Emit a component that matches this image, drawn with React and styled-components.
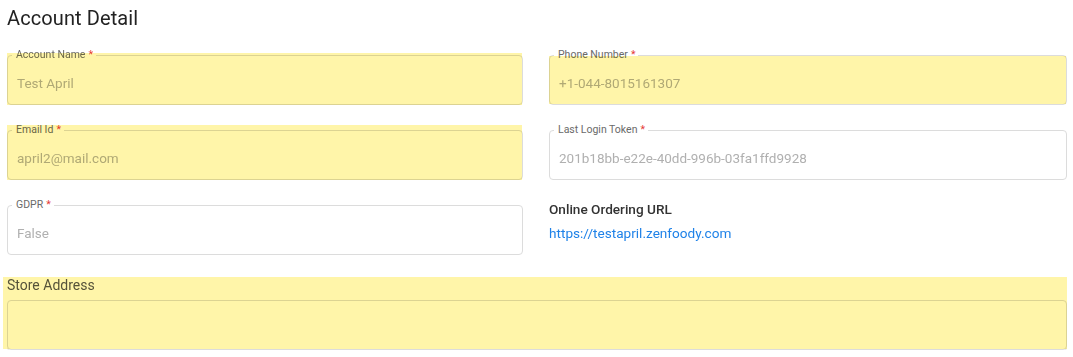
import React from "react";
import styled, { createGlobalStyle, css } from "styled-components";

const Global = createGlobalStyle`
  html, body { margin: 0; padding: 0; background: #fff; }
  body { font-family: Roboto, "Liberation Sans", Arial, sans-serif; }
  * { box-sizing: border-box; }
`;

const Page = styled.div`
  padding: 6px 6px 0 7px;
  width: 1073px;
`;

const Title = styled.h2`
  margin: 0;
  font-size: 20px;
  line-height: 24px;
  font-weight: 400;
  color: #222;
  letter-spacing: 0.1px;
`;

const Grid = styled.div`
  display: grid;
  grid-template-columns: 516px 518px;
  column-gap: 26px;
  row-gap: 19px;
  margin-top: 19px;
`;

const Cell = styled.div`
  padding-top: 6px;
`;

const highlight = css`
  &::after {
    content: "";
    position: absolute;
    top: ${(p) => p.$hl.t}px;
    bottom: ${(p) => p.$hl.b}px;
    left: ${(p) => p.$hl.l}px;
    right: ${(p) => p.$hl.r}px;
    background: #fff5a9;
    mix-blend-mode: multiply;
    pointer-events: none;
  }
`;

const Box = styled.div`
  position: relative;
  height: 50px;
  border: 1px solid #dcdcdc;
  border-radius: 4px;
  display: flex;
  align-items: center;
  padding: 5px 10px 0 9px;
  ${(p) => p.$hl && highlight}
`;

const Label = styled.span`
  position: absolute;
  top: -8px;
  left: 4px;
  padding: 0 3px 0 4px;
  background: #fff;
  font-size: 10.5px;
  line-height: 14px;
  color: #6a6a6a;
  white-space: nowrap;
`;

const Star = styled.span`
  color: #e53935;
  margin-left: 3px;
`;

const Value = styled.span`
  font-size: 13.5px;
  color: #b0b0b0;
`;

const Info = styled.div`
  display: flex;
  flex-direction: column;
  gap: 4px;
`;

const InfoTitle = styled.div`
  font-size: 13.6px;
  line-height: 20px;
  font-weight: 500;
  color: #333;
`;

const Link = styled.a`
  font-size: 13.6px;
  line-height: 20px;
  color: #1f82e8;
  text-decoration: none;
`;

const Section = styled.div`
  position: relative;
  margin-top: 20px;
  display: flex;
  flex-direction: column;
  gap: 5px;
  ${(p) => p.$hl && highlight}
`;

const SectionLabel = styled.div`
  font-size: 14px;
  line-height: 20px;
  color: #555;
`;

const TextArea = styled.div`
  height: 50px;
  border: 1px solid #dcdcdc;
  border-radius: 4px;
  box-shadow: 0 1px 0 #e6e6e6;
`;

function Field({ label, value, hl }) {
  return (
    <Cell>
      <Box $hl={hl}>
        <Label>
          {label}
          <Star>*</Star>
        </Label>
        <Value>{value}</Value>
      </Box>
    </Cell>
  );
}

export default function App() {
  return (
    <>
      <Global />
      <Page>
        <Title>Account Detail</Title>
        <Grid>
          <Field label="Account Name" value="Test April" hl={{ t: -3, b: -1, l: -1, r: 0 }} />
          <Field label="Phone Number" value="+1-044-8015161307" hl={{ t: 0, b: 0, l: -1, r: 0 }} />
          <Field label="Email Id" value="april2@mail.com" hl={{ t: -6, b: -1, l: -1, r: 0 }} />
          <Field label="Last Login Token" value="201b18bb-e22e-40dd-996b-03fa1ffd9928" />
          <Field label="GDPR" value="False" />
          <Info>
            <InfoTitle>Online Ordering URL</InfoTitle>
            <Link href="#">https://testapril.zenfoody.com</Link>
          </Info>
        </Grid>
        <Section $hl={{ t: 2, b: 1, l: -4, r: 0 }}>
          <SectionLabel>Store Address</SectionLabel>
          <TextArea />
        </Section>
      </Page>
    </>
  );
}
